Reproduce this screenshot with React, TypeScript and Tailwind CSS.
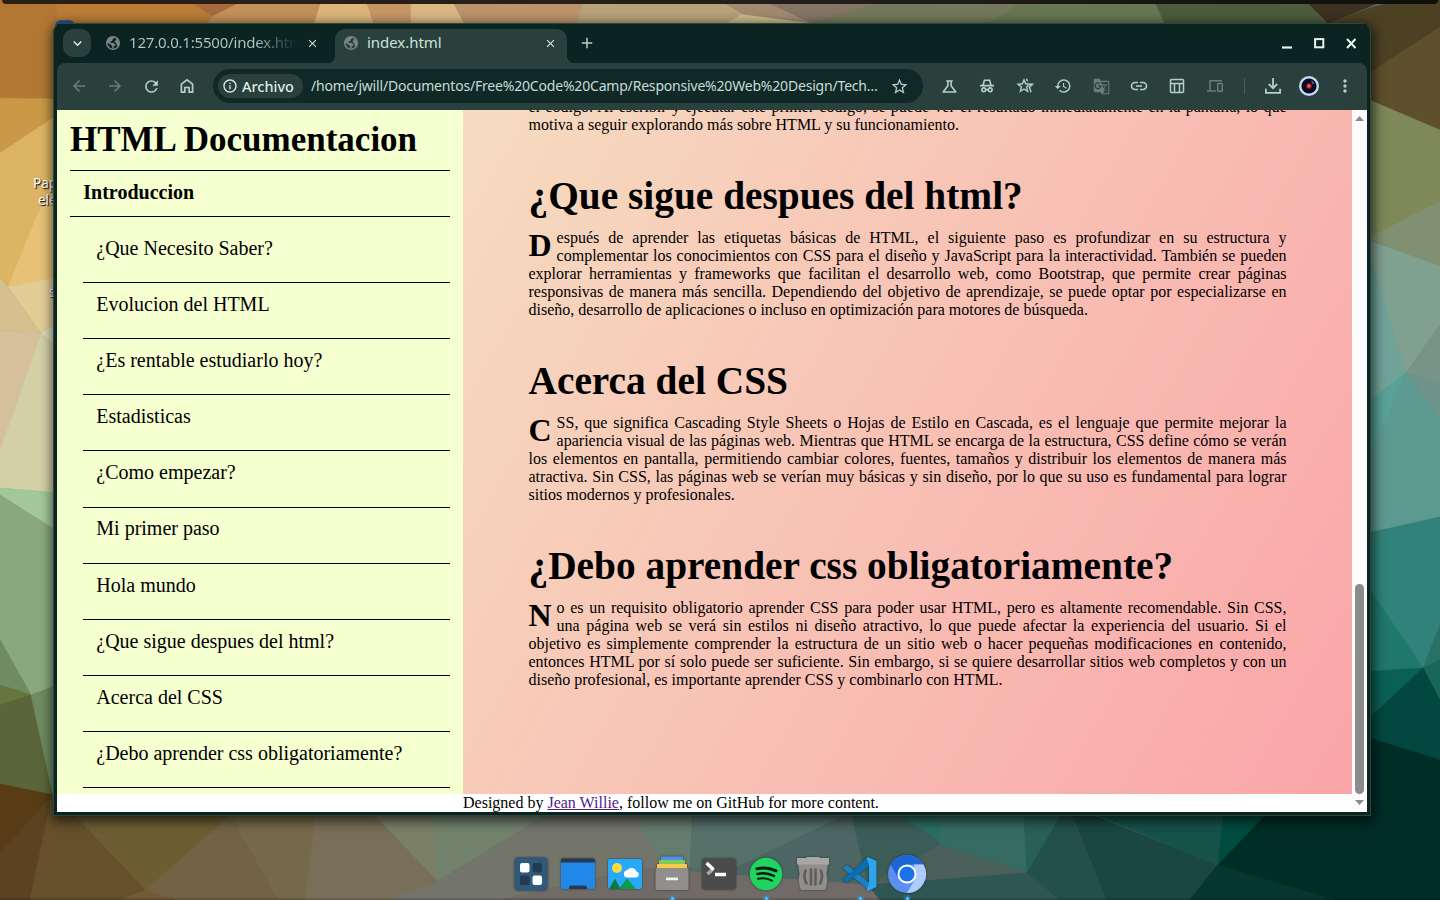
import React from "react";
import {
  MdArrowBack,
  MdArrowForward,
  MdRefresh,
  MdStarBorder,
  MdHistory,
  MdGTranslate,
  MdMoreVert,
  MdInfoOutline,
  MdClose,
  MdAdd,
  MdKeyboardArrowDown,
  MdOutlineScience,
} from "react-icons/md";

const facets: [string, string][] = [
  ["#b27733", "0,0 190,0 213,16 213,40 60,40 60,99 0,98"],
  ["#bb7c35", "57,4 190,4 213,16 205,30 60,30"],
  ["#a86840", "190,0 250,0 213,16"],
  ["#c29059", "245,0 330,0 312,30 200,30 213,16"],
  ["#dbb67a", "322,0 366,0 376,30 312,30"],
  ["#c69665", "366,0 411,0 411,30 376,30"],
  ["#dab684", "411,0 452,0 468,30 411,30"],
  ["#bd936c", "452,0 584,0 574,30 468,30"],
  ["#b7a279", "584,0 720,0 743,14 727,30 574,30"],
  ["#cdbb8a", "743,14 810,23 810,30 715,30"],
  ["#a28a70", "720,0 765,0 812,23 743,14"],
  ["#857565", "762,0 890,0 812,23"],
  ["#74795b", "890,0 1030,0 993,22 810,30 812,23"],
  ["#687653", "1025,0 1154,0 1168,30 980,30"],
  ["#4f5c3c", "1154,0 1305,0 1340,30 1168,30"],
  ["#3e3022", "1305,0 1385,0 1330,23 1380,60 1330,25"],
  ["#4d4124", "1370,8 1400,0 1440,0 1440,27 1365,76 1330,23"],
  ["#5e4f2d", "1360,79 1440,27 1440,130 1360,96"],
  ["#7f8859", "1360,96 1440,130 1440,201 1360,242"],
  ["#809070", "1360,242 1440,201 1440,266 1370,240"],
  ["#80a090", "1360,237 1440,266 1440,325 1406,373 1375,280"],
  ["#71a297", "1360,240 1380,285 1406,373 1360,408"],
  ["#779489", "1440,325 1440,385 1406,373"],
  ["#6e938a", "1406,373 1440,385 1440,420"],
  ["#5c9990", "1406,373 1440,420 1440,517 1360,535 1360,470"],
  ["#58a198", "1360,408 1406,373 1372,450"],
  ["#31827a", "1360,535 1440,517 1440,630 1423,668 1360,580"],
  ["#20776b", "1360,575 1423,668 1360,672"],
  ["#2a7066", "1440,625 1440,660 1423,668"],
  ["#0b6055", "1360,672 1423,668 1365,722"],
  ["#1b665b", "1423,668 1440,660 1440,700"],
  ["#034840", "1423,668 1440,700 1440,760 1360,735 1365,722"],
  ["#c99947", "0,98 60,99 60,113 0,153"],
  ["#dcb463", "0,153 60,113 54,195 8,287 0,278"],
  ["#e6c176", "60,170 60,278 8,287 36,218"],
  ["#e3cd97", "8,287 60,277 60,322 41,333"],
  ["#d6c08f", "0,278 8,287 41,333 0,330"],
  ["#d6c09c", "0,330 41,333 0,450"],
  ["#dfdcb8", "41,333 60,322 60,350"],
  ["#d3cfa7", "41,333 60,350 60,493 0,488 0,450"],
  ["#a2c79b", "0,488 60,493 60,533 0,495"],
  ["#8aa87d", "0,495 60,533 60,684 31,695 0,640"],
  ["#6f8b61", "0,640 31,695 0,685"],
  ["#65773f", "0,685 31,695 0,706"],
  ["#5b653a", "0,705 31,695 53,795 0,784"],
  ["#6e8a60", "31,695 60,684 60,800 53,795"],
  ["#573c16", "0,784 53,795 0,854"],
  ["#5c4221", "0,853 53,795 30,900 0,900"],
  ["#66502b", "52,795 75,812 146,890 120,900 30,900"],
  ["#6c5d33", "60,800 240,800 230,817 146,890"],
  ["#726344", "146,890 230,815 278,900 170,900"],
  ["#735a38", "146,890 175,900 120,900"],
  ["#75694a", "222,800 318,800 306,900 278,900"],
  ["#796e57", "317,800 362,800 438,881 390,900 305,900"],
  ["#7a7f66", "360,800 432,800 438,881"],
  ["#72826d", "432,800 580,800 500,845 438,881"],
  ["#73746a", "438,881 570,800 633,800 665,865 690,900 390,900"],
  ["#667c6e", "625,800 695,800 690,868 660,860"],
  ["#5f766d", "693,800 765,815 740,865 690,868"],
  ["#56716a", "693,800 870,805 735,868 690,868"],
  ["#4d6663", "735,868 850,813 868,885 700,895"],
  ["#706b67", "640,868 868,885 880,900 500,900"],
  ["#3c5d57", "848,800 945,800 945,880 868,885"],
  ["#2b6d60", "895,812 1025,812 945,845"],
  ["#356b60", "940,800 1023,800 1027,873 940,845"],
  ["#4b605a", "868,885 940,845 1027,873 940,882"],
  ["#2e5753", "868,885 1027,873 1060,900 880,900"],
  ["#296055", "1023,800 1070,800 1027,873"],
  ["#23504b", "1067,805 1107,900 1060,900 1027,873"],
  ["#1a4742", "1068,805 1218,865 1190,900 1107,900"],
  ["#15524a", "1060,800 1227,800 1218,865"],
  ["#004b40", "1225,800 1285,800 1218,865"],
  ["#002d26", "1280,800 1360,735 1440,760 1440,900 1190,900 1218,865"],
  ["#06372f", "1218,865 1335,900 1190,900"],
];

function Wallpaper() {
  return (
    <svg className="absolute inset-0" width="1440" height="900" viewBox="0 0 1440 900">
      <rect width="1440" height="900" fill="#566a5d" />
      {facets.map(([fill, points]) => (
        <polygon key={points} points={points} fill={fill} stroke={fill} strokeWidth="0.6" />
      ))}
      <rect y="898" width="1440" height="2" fill="#000" opacity="0.15" />
    </svg>
  );
}

const GlobeIcon = () => (
  <svg width="16" height="16" viewBox="0 0 16 16" className="shrink-0">
    <circle cx="8" cy="8" r="6.3" fill="none" stroke="#7b8583" strokeWidth="1.5" />
    <path
      d="M2 6.500C3.200 3.600 5.500 2 8.500 1.800c1 .2 1 1.400.2 2l-1.500.9v1.500H5.600v1.700h3.200l1.500 1.500v1.400h-1.600v2.600C7 13.700 7 12 7.200 11L4.800 8.800 2 8zM11 3l3 3.500v3.500l-1.500 1.500-1-1.800V8.500L9.800 7V5.500H11z"
      fill="#7b8583"
    />
  </svg>
);

const HomeIcon = () => (
  <svg width="18" height="18" viewBox="0 0 18 18" fill="none" stroke="currentColor" strokeWidth="1.7">
    <path d="M3.400 7.200 9 2.900l5.600 4.300v8h-3.500v-4.700H6.900v4.700H3.400z" />
  </svg>
);

const IncognitoIcon = () => (
  <svg width="18" height="18" viewBox="0 0 18 18" fill="none" stroke="currentColor" strokeWidth="1.6">
    <path d="M2 8.600h14M5 8.500l1.400-5.200h5.200L13 8.500M7.800 12.800h2.400" />
    <circle cx="5.800" cy="12.800" r="1.900" />
    <circle cx="12.200" cy="12.800" r="1.900" />
  </svg>
);

const BookmarksIcon = () => (
  <svg width="20" height="20" viewBox="0 0 20 20" fill="none" stroke="currentColor" strokeWidth="1.4">
    <path d="m9 3.800 1.600 4 4.300.4-3.300 2.800 1 4.300L9 13l-3.600 2.300 1-4.300-3.300-2.800 4.300-.4z" />
    <path d="m11.500 2.800 1 2.600M14.900 8.200h2.600l-3 3 1.500 5" />
  </svg>
);

const LinkIcon = () => (
  <svg width="18" height="18" viewBox="0 0 18 18" fill="none" stroke="currentColor" strokeWidth="1.600">
    <path d="M8 5.500H5a3.500 3.500 0 0 0 0 7h3M10 5.500h3a3.500 3.500 0 0 1 0 7h-3M6 9h6" />
  </svg>
);

const LayoutIcon = () => (
  <svg width="18" height="18" viewBox="0 0 18 18" fill="none" stroke="currentColor" strokeWidth="1.5">
    <rect x="2.500" y="2.500" width="13" height="13" rx="1" />
    <path d="M2.500 6.500h13M6.500 6.500v9M11.500 6.500v9" />
  </svg>
);

const DevicesIcon = () => (
  <svg width="18" height="18" viewBox="0 0 18 18" fill="none" stroke="currentColor" strokeWidth="1.5">
    <path d="M16 3.700H4v10M1 14h9" />
    <rect x="11.700" y="6.500" width="4.500" height="7.800" rx="0.500" />
  </svg>
);

const DownloadIcon = () => (
  <svg width="20" height="20" viewBox="0 0 20 20" fill="none" stroke="currentColor" strokeWidth="1.8">
    <path d="M10 2v10M5.800 8 10 12.200 14.200 8M2.900 12.800v4h14.200v-4" />
  </svg>
);

function Tool({ children, dim = false, wide = false }: { children: React.ReactNode; dim?: boolean; wide?: boolean }) {
  return (
    <button
      className={`flex h-9 shrink-0 items-center justify-center ${wide ? "w-[38px]" : "w-9"} ${
        dim ? "text-[#687e79]" : "text-[#b3d0c9]"
      }`}
    >
      {children}
    </button>
  );
}

function TabStrip() {
  return (
    <div className="flex h-[39px] items-end bg-[#0b2421] pl-[6px]">
      <button className="mb-[6px] flex size-7 shrink-0 items-center justify-center rounded-[10px] bg-[#29403c] text-[#e0f3ee]">
        <MdKeyboardArrowDown size={17} />
      </button>
      <div className="flex h-[34px] w-[244px] shrink-0 items-center pb-[6px] pl-[14px]">
        <GlobeIcon />
        <span className="ml-[8px] w-[168px] overflow-hidden bg-linear-to-r from-[#adcac3] from-75% to-[#0b2421] bg-clip-text pb-[2px] whitespace-nowrap text-[15px] leading-5 tracking-[-0.2px] text-transparent">
          127.0.0.1:5500/index.html
        </span>
        <MdClose size={13} className="ml-[9px] shrink-0 text-[#c7ded8]" />
      </div>
      <div className="relative flex h-[34px] w-[232px] shrink-0 items-center rounded-t-[10px] bg-[#29403c] pb-[6px] pl-[8px]">
        <span className="absolute bottom-0 -left-2 size-2 bg-[radial-gradient(circle_at_0_0,transparent_8px,#29403c_8.5px)]" />
        <span className="absolute -right-2 bottom-0 size-2 bg-[radial-gradient(circle_at_100%_0,transparent_8px,#29403c_8.5px)]" />
        <GlobeIcon />
        <span className="ml-[8px] w-[177px] pb-[2px] text-[15px] leading-5 tracking-[-0.050px] text-[#c9e2dc]">index.html</span>
        <MdClose size={13} className="shrink-0 text-[#d5ebe5]" />
      </div>
      <button className="ml-[11px] flex h-[40px] items-center text-[#b3d0c9]">
        <MdAdd size={18} />
      </button>
      <div className="mr-[10px] ml-auto flex h-[39px] items-center gap-[21px] pb-[1px] text-[#e2f5f0]">
        <svg width="11" height="11" viewBox="0 0 11 11"><path d="M0 9.500h10" stroke="currentColor" strokeWidth="2.2" /></svg>
        <svg width="11" height="11" viewBox="0 0 11 11" fill="none"><rect x="1.100" y="1.100" width="8.200" height="8.200" stroke="currentColor" strokeWidth="2" /></svg>
        <svg width="11" height="11" viewBox="0 0 11 11"><path d="m1 1 8.500 9M9.500 1 1 10" stroke="currentColor" strokeWidth="2" /></svg>
      </div>
    </div>
  );
}

function Toolbar() {
  return (
    <div className="flex h-[47px] items-center rounded-t-lg bg-[#29403c] pb-[1px] pl-1">
      <Tool dim><MdArrowBack size={18} /></Tool>
      <Tool dim><MdArrowForward size={18} /></Tool>
      <Tool><MdRefresh size={19} /></Tool>
      <Tool><HomeIcon /></Tool>
      <div className="ml-2 flex h-[34px] w-[710px] shrink-0 items-center rounded-full bg-[#102927] pr-[14px] pl-[5px]">
        <div className="flex h-6 w-[85px] shrink-0 items-center rounded-full bg-[#29403c] pl-[4px] text-[#dcefea]">
          <MdInfoOutline size={16} />
          <span className="ml-1 text-[14.500px] leading-6 font-medium">Archivo</span>
        </div>
        <span className="ml-2 flex-1 pb-[1px] whitespace-nowrap text-[14px] tracking-[-0.190px] text-[#c6ddd7]">
          /home/jwill/Documentos/Free%20Code%20Camp/Responsive%20Web%20Design/Tech…
        </span>
        <MdStarBorder size={19} className="shrink-0 text-[#b3d0c9]" />
      </div>
      <div className="ml-[7px] flex items-center">
        <Tool wide><MdOutlineScience size={19} /></Tool>
        <Tool wide><IncognitoIcon /></Tool>
        <Tool wide><BookmarksIcon /></Tool>
        <Tool wide><MdHistory size={18} /></Tool>
        <Tool wide dim><MdGTranslate size={17} /></Tool>
        <Tool wide><LinkIcon /></Tool>
        <Tool wide><LayoutIcon /></Tool>
        <Tool wide dim><DevicesIcon /></Tool>
      </div>
      <div className="flex w-[21px] justify-center"><span className="h-4 w-[1.5px] bg-[#49605b]" /></div>
      <Tool><DownloadIcon /></Tool>
      <Tool>
        <svg width="20" height="20" viewBox="0 0 20 20">
          <circle cx="10" cy="10" r="10" fill="#c5daf6" />
          <circle cx="10" cy="10" r="7.600" fill="#0a0b22" />
          <path d="M12 4.200a6 6 0 0 1 3.600 3.300l-2 1z" fill="#56607a" />
          <circle cx="10" cy="10" r="3" fill="#6e1824" />
          <circle cx="10" cy="10" r="1.800" fill="#ff5a4e" />
        </svg>
      </Tool>
      <Tool><MdMoreVert size={20} /></Tool>
    </div>
  );
}

const topics = [
  "¿Que Necesito Saber?",
  "Evolucion del HTML",
  "¿Es rentable estudiarlo hoy?",
  "Estadisticas",
  "¿Como empezar?",
  "Mi primer paso",
  "Hola mundo",
  "¿Que sigue despues del html?",
  "Acerca del CSS",
  "¿Debo aprender css obligatoriamente?",
];

const sections = [
  {
    title: "¿Que sigue despues del html?",
    body: "Después de aprender las etiquetas básicas de HTML, el siguiente paso es profundizar en su estructura y complementar los conocimientos con CSS para el diseño y JavaScript para la interactividad. También se pueden explorar herramientas y frameworks que facilitan el desarrollo web, como Bootstrap, que permite crear páginas responsivas de manera más sencilla. Dependiendo del objetivo de aprendizaje, se puede optar por especializarse en diseño, desarrollo de aplicaciones o incluso en optimización para motores de búsqueda.",
  },
  {
    title: "Acerca del CSS",
    body: "CSS, que significa Cascading Style Sheets o Hojas de Estilo en Cascada, es el lenguaje que permite mejorar la apariencia visual de las páginas web. Mientras que HTML se encarga de la estructura, CSS define cómo se verán los elementos en pantalla, permitiendo cambiar colores, fuentes, tamaños y distribuir los elementos de manera más atractiva. Sin CSS, las páginas web se verían muy básicas y sin diseño, por lo que su uso es fundamental para lograr sitios modernos y profesionales.",
  },
  {
    title: "¿Debo aprender css obligatoriamente?",
    body: "No es un requisito obligatorio aprender CSS para poder usar HTML, pero es altamente recomendable. Sin CSS, una página web se verá sin estilos ni diseño atractivo, lo que puede afectar la experiencia del usuario. Si el objetivo es simplemente comprender la estructura de un sitio web o hacer pequeñas modificaciones en contenido, entonces HTML por sí solo puede ser suficiente. Sin embargo, si se quiere desarrollar sitios web completos y con un diseño profesional, es importante aprender CSS y combinarlo con HTML.",
  },
];

function Page() {
  return (
    <div className="flex h-[702px] bg-white font-['Liberation_Serif',serif] text-black">
      <div className="flex min-w-0 flex-1 flex-col">
        <div className="flex h-[684px] overflow-hidden">
          <nav className="w-[406px] shrink-0 bg-[#f5ffd0] px-[13px] pt-[10px]">
            <h1 className="h-[51px] border-b border-black text-[35px] leading-10 font-bold">HTML Documentacion</h1>
            <div className="h-[46px] border-b border-black pt-[10px] pl-[13.3px] text-[20px] leading-[23px] font-bold">
              Introduccion
            </div>
            <ul className="ml-[13px] pt-[10px]">
              {topics.map((t) => (
                <li key={t} className="h-[56.12px] border-b border-black pt-[9.9px] pl-[13.3px] text-[20px] leading-[23px]">
                  {t}
                </li>
              ))}
            </ul>
          </nav>
          <main className="flex-1 bg-[linear-gradient(120deg,#f6dcc0,#faa5a8)] pr-[65px] pl-[65.5px]">
            <p className="-mt-3 w-[758px] text-justify text-[16px] leading-[18px]">
              el código. Al escribir y ejecutar este primer código, se puede ver el resultado inmediatamente en la pantalla, lo
              que motiva a seguir explorando más sobre HTML y su funcionamiento.
            </p>
            {sections.map((s) => (
              <section key={s.title} className="w-[758px] pt-[39px]">
                <h2 className="mb-[10px] text-[39.36px] leading-[46px] font-bold whitespace-nowrap">{s.title}</h2>
                <p className="text-justify text-[16px] leading-[18px] first-letter:float-left first-letter:mr-[5px] first-letter:text-[32px] first-letter:leading-[32px] first-letter:font-bold">
                  {s.body}
                </p>
              </section>
            ))}
          </main>
        </div>
        <footer className="pl-[406px] text-[16px] leading-[18px]">
          Designed by <a className="text-[#551a8b] underline">Jean Willie</a>, follow me on GitHub for more content.
        </footer>
      </div>
      <div className="flex w-[15px] shrink-0 flex-col items-center bg-[#fcfcfc]">
        <svg width="9" height="13" viewBox="0 0 9 13" className="shrink-0"><path d="M0 11 4.500 6 9 11z" fill="#8b8b8b" /></svg>
        <div className="mt-auto mb-[5px] h-[210px] w-[9px] rounded-full bg-[#8b8b8b]" />
        <svg width="9" height="13" viewBox="0 0 9 13" className="shrink-0"><path d="M0 1 4.500 6 9 1z" fill="#8b8b8b" /></svg>
      </div>
    </div>
  );
}

const dockIcons: { name: string; running?: boolean; art: React.ReactNode }[] = [
  {
    name: "overview",
    art: (
      <>
        <rect x="3.500" y="3.500" width="33" height="33" rx="4" fill="#30597a" />
        <rect x="9" y="9" width="9.500" height="9.500" rx="2" fill="#fff" />
        <rect x="21.500" y="9" width="9.500" height="9.500" rx="2" fill="#243a4e" />
        <rect x="9" y="21.500" width="9.500" height="9.500" rx="2" fill="#243a4e" />
        <rect x="21.500" y="21.500" width="9.500" height="9.500" rx="2" fill="#fff" />
      </>
    ),
  },
  {
    name: "desktop",
    art: (
      <>
        <rect x="3" y="5" width="34" height="30" rx="1.500" fill="#2088e8" />
        <path d="M3 8.500V6.500q0-2 2-2h30q2 0 2 2v2z" fill="#263950" />
        <path d="m10.500 35 1.500-3.500h16l1.500 3.500z" fill="#263950" />
      </>
    ),
  },
  {
    name: "pictures",
    art: (
      <>
        <rect x="3" y="5" width="34" height="30" rx="2" fill="#27a8fb" />
        <circle cx="12" cy="14" r="5" fill="#fbdd3c" />
        <path d="M14 35 22 24.500 31 35z" fill="#0b9b49" />
        <path d="M4 35 10 24.500 15.500 35z" fill="#087c3c" />
        <path d="M21.500 23.500a3.700 3.700 0 0 1 .6-7.200 5.300 5.300 0 0 1 9.400 1.300 3 3 0 0 1-.3 5.900z" fill="#fff" />
      </>
    ),
  },
  {
    name: "files",
    running: true,
    art: (
      <>
        <rect x="9" y="2.500" width="22" height="8" rx="1" fill="#4e91ed" />
        <rect x="7" y="6" width="26" height="8" rx="1" fill="#82ca58" />
        <rect x="5" y="10" width="30" height="8" rx="1" fill="#f5c84e" />
        <rect x="3.500" y="14" width="33" height="22" rx="1.500" fill="#918e8d" />
        <rect x="14" y="23.500" width="12" height="2.800" rx="0.500" fill="#f4f4f4" />
      </>
    ),
  },
  {
    name: "terminal",
    art: (
      <>
        <rect x="3" y="4.500" width="34" height="31" rx="3" fill="#4b4b4b" />
        <path d="m8.500 20 6-5.500" stroke="#aaa" strokeWidth="3.500" />
        <path d="m7.500 9 7 6.500" stroke="#fff" strokeWidth="3.500" />
        <path d="M16 20.500h11" stroke="#fff" strokeWidth="3.500" />
      </>
    ),
  },
  {
    name: "music",
    running: true,
    art: (
      <>
        <circle cx="20" cy="20" r="16.200" fill="#1ed65f" />
        <g fill="none" stroke="#0a1c10" strokeLinecap="round">
          <path d="M11 14.800q9.500-2.500 19 2" strokeWidth="3" />
          <path d="M11.500 20q8.500-2.200 16.500 2" strokeWidth="2.500" />
          <path d="M12 24.800q7.500-1.800 14 1.800" strokeWidth="2" />
        </g>
      </>
    ),
  },
  {
    name: "trash",
    art: (
      <>
        <path d="M5 10h30l-1.500 10 1 6-1.500 8q-.5 2-2.500 2H9.500q-2 0-2.500-2l-1.500-8 1-6z" fill="#918e8d" />
        <path d="M4 4h9l1-1h12l1 1h9v6.500H4z" fill="#a9a7a6" />
        <g fill="none" stroke="#5f5d5c" strokeWidth="2.600" strokeLinecap="round">
          <path d="M12.500 16.500q-2.500 7 1 13M18 15.500v15M22.500 15.500v15M28 16.500q2.500 7-1 13" />
        </g>
      </>
    ),
  },
  {
    name: "code",
    running: true,
    art: (
      <>
        <path d="m3 14 4-3L31 30l-2 6.500z" fill="#1681c8" />
        <path d="M28 3 3 25.500l4 3L31 10.500z" fill="#0b6eb5" />
        <path d="m28 3 8.500 4v26L28 37l-1.500-1.500L29 30V10l-2.500-5.500z" fill="#2aa5ee" />
      </>
    ),
  },
  {
    name: "browser",
    running: true,
    art: (
      <>
        <circle cx="20" cy="20" r="19" fill="#5c8ff0" />
        <path d="M3.500 10.500A19 19 0 0 1 36.500 10.500H20L11.500 24.500z" fill="#1a66d2" />
        <path d="M36.500 10.500A19 19 0 0 1 20 39l8.500-14.500L27 10.500z" fill="#aecbfa" />
        <circle cx="20" cy="20" r="9.500" fill="#fff" />
        <circle cx="20" cy="20" r="7.600" fill="#1a73e8" />
      </>
    ),
  },
];

function Dock() {
  return (
    <div className="mx-auto flex w-[423px] justify-between">
      {dockIcons.map((d) => (
        <div key={d.name} className="flex w-[47px] shrink-0 flex-col items-center">
          <svg width="40" height="40" viewBox="0 0 40 40" className="drop-shadow-[0_0_1px_rgba(0,0,0,0.5)]">{d.art}</svg>
          {d.running && <span className="mt-[3px] size-[3px] rounded-full bg-[#5fbdf7] shadow-[0_0_3px_1px_#3c9bd8]" />}
        </div>
      ))}
    </div>
  );
}

export default function App() {
  return (
    <div className="relative h-[900px] w-[1440px] overflow-hidden font-['Noto_Sans',sans-serif]">
      <Wallpaper />
      <div className="relative flex h-full flex-col">
        <div className="mx-[2px] h-1 shrink-0 rounded-b-md bg-[linear-gradient(90deg,#2c2015,#221e1c_60%,#0e0f0b)]" />
        <div className="absolute top-[175px] left-[33px] w-10 text-[13.500px] leading-[17px] whitespace-nowrap text-white [text-shadow:1px_1px_1px_#000]">
          <div>Papel</div>
          <div className="pl-[5px]">ele</div>
          <div className="mt-[75px] pl-[16px]">s</div>
        </div>
        <div className="absolute top-[20px] left-[55px] size-5 rounded-md bg-[#2e5591]" />
        <div className="relative mt-[19px] ml-[53px] h-[793px] w-[1318px] shrink-0 rounded-t-[9px] border border-[#29483f] bg-[#0b2421] pr-[3px] pb-[3px] pl-[3px] shadow-[1px_3px_12px_2px_rgba(0,0,0,0.65)]">
          <TabStrip />
          <Toolbar />
          <Page />
        </div>
        <div className="mt-[38px] pr-[2px]">
          <Dock />
        </div>
      </div>
    </div>
  );
}
